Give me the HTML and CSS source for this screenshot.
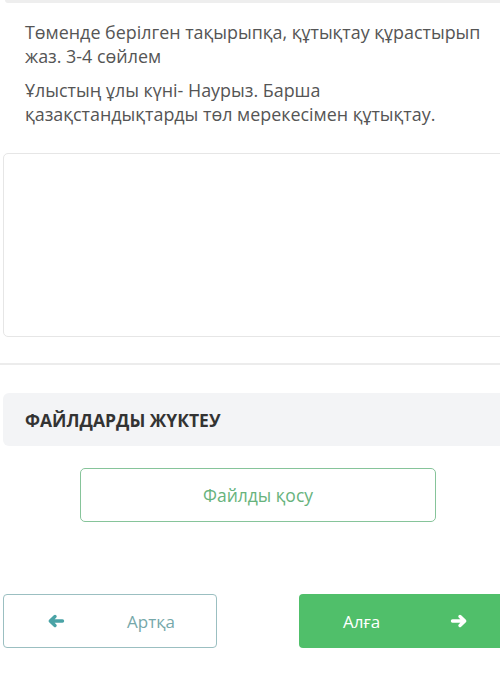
FILE: index.html
```html
<!DOCTYPE html>
<html lang="kk">
<head>
<meta charset="utf-8">
<link rel="stylesheet" href="styles.css">
</head>
<body>
<div class="page">
  <div class="topbar"></div>
  <div class="question">
    <p class="q-line">Төменде берілген тақырыпқа, құтықтау құрастырып жаз. 3-4 сөйлем</p>
    <p class="q-line second">Ұлыстың ұлы күні- Наурыз. Барша қазақстандықтарды төл мерекесімен құтықтау.</p>
  </div>
  <div class="answer"></div>
  <div class="divider"></div>
  <div class="section-head">ФАЙЛДАРДЫ ЖҮКТЕУ</div>
  <div class="upload-row">
    <div class="upload-btn">Файлды қосу</div>
  </div>
  <div class="nav">
    <div class="btn back">
      <svg class="arrow" viewBox="0 0 18 14" width="18" height="14"><path d="M15.5 7H4 M8 2.5L3.3 7 8 11.5" fill="none" stroke="#4aa3a6" stroke-width="3.4" stroke-linecap="round" stroke-linejoin="round"/></svg>
      <span class="label">Артқа</span>
    </div>
    <div class="btn next">
      <span class="label">Алға</span>
      <svg class="arrow" viewBox="0 0 18 14" width="18" height="14"><path d="M2.5 7H14 M10 2.5L14.7 7 10 11.5" fill="none" stroke="#ffffff" stroke-width="3.4" stroke-linecap="round" stroke-linejoin="round"/></svg>
    </div>
  </div>
</div>
</body>
</html>
```

FILE: styles.css
```css
html, body {
  margin: 0;
  padding: 0;
  background: #ffffff;
  overflow: hidden;
}
.page {
  width: 500px;
  font-family: "Open Sans", "Noto Sans", sans-serif;
  color: #555555;
  overflow: hidden;
}
.topbar {
  height: 3px;
  margin-left: 5px;
  background: #eeeeee;
  border-bottom-left-radius: 4px;
}
.question {
  padding: 17px 16px 0 25px;
}
.q-line {
  margin: 0;
  font-size: 17.9px;
  line-height: 24px;
}
.q-line.second {
  margin-top: 10px;
}
.answer {
  margin: 27px -10px 0 3px;
  height: 182px;
  border: 1px solid #e6e6e6;
  border-radius: 5px;
}
.divider {
  margin-top: 26px;
  height: 2px;
  background: #ececec;
}
.section-head {
  margin: 28px -10px 0 3px;
  height: 53px;
  background: #f3f4f6;
  border-radius: 6px;
  display: flex;
  align-items: center;
  padding-left: 22px;
  font-size: 17.5px;
  font-weight: 700;
  color: #333333;
}
.upload-row {
  display: flex;
  padding-left: 80px;
  margin-top: 22px;
}
.upload-btn {
  width: 354px;
  height: 52px;
  border: 1px solid #86c49a;
  border-radius: 5px;
  display: flex;
  align-items: center;
  justify-content: center;
  color: #67b37c;
  font-size: 17.5px;
}
.nav {
  display: flex;
  justify-content: space-between;
  margin: 72px -10px 0 3px;
}
.btn {
  height: 54px;
  box-sizing: border-box;
  border-radius: 4px;
  display: flex;
  align-items: center;
  font-size: 17px;
}
.back {
  width: 214px;
  border: 1px solid #9bbfc1;
  color: #76a8aa;
  padding-left: 43px;
}
.back .label {
  margin-left: 62px;
}
.next {
  width: 211px;
  background: #50bf6a;
  color: #ffffff;
  padding-left: 44px;
}
.next .label {
  margin-right: 70px;
}
.arrow {
  display: block;
  flex: none;
}
```
